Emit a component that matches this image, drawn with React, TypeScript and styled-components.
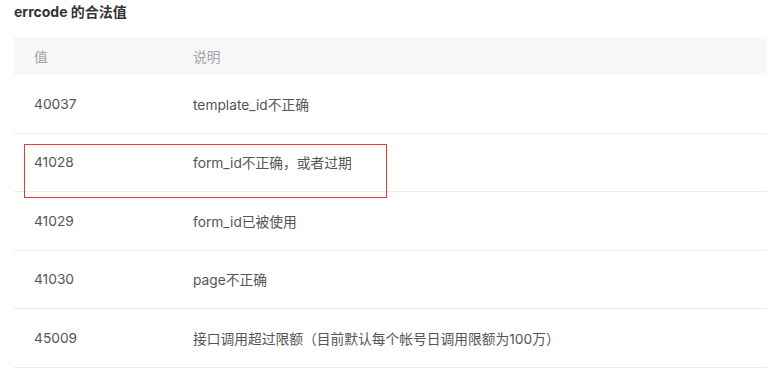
import React from "react";
import styled, { createGlobalStyle } from "styled-components";

const Global = createGlobalStyle`
  html, body { margin: 0; padding: 0; background: #ffffff; }
  body {
    font-family: "Inter", "Noto Sans CJK SC", sans-serif;
    -webkit-font-smoothing: antialiased;
  }
`;

const Page = styled.div`
  width: 771px;
  padding: 2px 4px 0 14px;
  box-sizing: border-box;
`;

const Title = styled.h4`
  margin: 0;
  height: 20px;
  line-height: 20px;
  font-size: 14px;
  font-weight: 700;
  color: #353535;
`;

const Table = styled.div`
  position: relative;
  margin-top: 15px;
  width: 753px;
`;

const Row = styled.div<{ $head?: boolean }>`
  display: grid;
  grid-template-columns: 159px 1fr;
  align-items: center;
  height: ${(p) => (p.$head ? "38px" : "57.5px")};
  padding-left: 20px;
  background: ${(p) => (p.$head ? "#f6f7f9" : "#ffffff")};
  border-bottom: ${(p) => (p.$head ? "none" : "1px solid #eaebee")};
  font-size: 13.75px;
  color: ${(p) => (p.$head ? "#a3a3a3" : "#555555")};
`;

const Cell = styled.div`
  white-space: nowrap;
`;

const Highlight = styled.div`
  position: absolute;
  left: 10px;
  top: 107px;
  width: 361px;
  height: 52px;
  border: 1px solid #f03535;
  pointer-events: none;
`;

const rows: [string, string][] = [
  ["40037", "template_id不正确"],
  ["41028", "form_id不正确，或者过期"],
  ["41029", "form_id已被使用"],
  ["41030", "page不正确"],
  ["45009", "接口调用超过限额（目前默认每个帐号日调用限额为100万）"],
];

export default function App() {
  return (
    <>
      <Global />
      <Page>
        <Title>errcode 的合法值</Title>
        <Table>
          <Row $head>
            <Cell>值</Cell>
            <Cell>说明</Cell>
          </Row>
          {rows.map(([code, desc]) => (
            <Row key={code}>
              <Cell>{code}</Cell>
              <Cell>{desc}</Cell>
            </Row>
          ))}
          <Highlight />
        </Table>
      </Page>
    </>
  );
}
